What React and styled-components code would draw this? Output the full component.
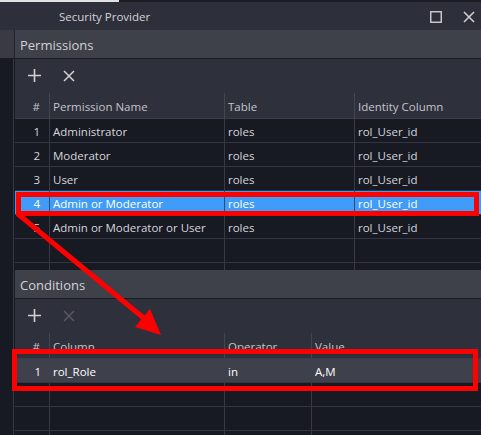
import styled, { createGlobalStyle } from 'styled-components';

const GlobalStyle = createGlobalStyle`
    html, body {
        margin: 0;
        padding: 0;
        background: #171923;
    }
    * {
        box-sizing: border-box;
    }
`;

const Window = styled.div`
    position: relative;
    width: 481px;
    height: 435px;
    display: flex;
    flex-direction: column;
    overflow: hidden;
    background: #171923;
    font-family: "Open Sans", "Liberation Sans", sans-serif;
`;

const TopStrip = styled.div`
    height: 2px;
    display: flex;
    background: #1c1d25;
`;

const TopTab = styled.div`
    width: 119px;
    background: #e2e2e4;
`;

const TitleBar = styled.div`
    height: 28px;
    display: flex;
    align-items: center;
    padding-left: 59px;
    padding-top: 1px;
    background: #2d2f3a;
    color: #d4d4d8;
    font-size: 11.5px;
`;

const WindowControls = styled.div`
    margin-left: auto;
    display: flex;
    align-items: center;
    gap: 21px;
    padding-right: 6px;
`;

const Body = styled.div`
    flex: 1;
    display: flex;
    min-height: 0;
`;

const Gutter = styled.div`
    width: 15px;
    display: flex;
    flex-direction: column;
`;

const GutterTop = styled.div`
    height: 29px;
    background: #393a44;
    border-right: 1px solid #22232b;
    border-bottom: 1px solid #1b1c23;
`;

const GutterRest = styled.div`
    flex: 1;
    background: linear-gradient(
        to right,
        #171923 13px,
        #373842 13px,
        #373842 14px,
        #171923 14px
    );
`;

const Main = styled.div`
    flex: 1;
    display: flex;
    flex-direction: column;
    min-width: 0;
`;

const Panel = styled.section`
    display: flex;
    flex-direction: column;
    height: ${(p) => (p.$height ? `${p.$height}px` : 'auto')};
    flex: ${(p) => (p.$height ? '0 0 auto' : '1')};
    overflow: hidden;
`;

const PanelHeader = styled.div`
    height: 29px;
    display: flex;
    align-items: center;
    padding: 2px 0 0 5px;
    background: #3e404a;
    border-bottom: 1px solid #1b1c23;
    color: #d2d2d6;
    font-size: 13px;
`;

const Toolbar = styled.div`
    height: 34px;
    display: flex;
    align-items: center;
    gap: 21px;
    padding: 0 0 1px 13px;
    background: #2e303b;
`;

const ToolButton = styled.button`
    width: 13px;
    height: 13px;
    padding: 0;
    border: none;
    background: none;
    display: flex;
    align-items: center;
    justify-content: center;
    color: ${(p) => (p.disabled ? '#575862' : '#d2d2d6')};
    cursor: ${(p) => (p.disabled ? 'default' : 'pointer')};
`;

const Grid = styled.div`
    flex: 1;
    overflow: hidden;
    background: #171923;
`;

const HeaderRow = styled.div`
    height: 26px;
    display: grid;
    grid-template-columns: ${(p) => p.$cols};
    background: #2e303b;
    border-bottom: 1px solid #3c3d47;
`;

const HeaderCell = styled.div`
    display: flex;
    align-items: center;
    justify-content: ${(p) => (p.$num ? 'flex-end' : 'flex-start')};
    padding: ${(p) => (p.$num ? '1px 9px 0 0' : '1px 0 0 3px')};
    border-right: ${(p) => (p.$last ? 'none' : '1px solid #44454f')};
    color: #c4c4ca;
    font-size: 11.5px;
    white-space: nowrap;
`;

const Row = styled.div`
    height: 24px;
    display: grid;
    grid-template-columns: ${(p) => p.$cols};
    border-bottom: 1px solid #34353f;
    background: ${(p) =>
        p.$selected === 'active'
            ? '#409cf8'
            : p.$selected === 'inactive'
            ? '#3e404b'
            : 'transparent'};
    color: ${(p) => (p.$selected ? '#ffffff' : '#d6d6da')};
`;

const Cell = styled.div`
    display: flex;
    align-items: center;
    justify-content: ${(p) => (p.$num ? 'flex-end' : 'flex-start')};
    padding: ${(p) => (p.$num ? '2px 9px 0 0' : '2px 0 0 3px')};
    border-right: ${(p) => (p.$last || p.$plain ? 'none' : `1px solid ${p.$line || '#393a44'}`)};
    font-size: 11.5px;
    white-space: nowrap;
    overflow: hidden;
`;

const Annotations = styled.svg`
    position: absolute;
    left: 0;
    top: 0;
    pointer-events: none;
`;

const PlusIcon = () => (
    <svg width="13" height="13" viewBox="0 0 13 13">
        <path d="M6.5 0V13M0 6.5H13" stroke="currentColor" strokeWidth="1.6" />
    </svg>
);

const CrossIcon = ({ size = 12 }) => (
    <svg width={size} height={size} viewBox="0 0 12 12">
        <path d="M1 1L11 11M11 1L1 11" stroke="currentColor" strokeWidth="1.5" />
    </svg>
);

const MaximizeIcon = () => (
    <svg width="12" height="12" viewBox="0 0 12 12">
        <rect x="0.75" y="0.75" width="10.5" height="10.5" fill="none" stroke="#cfcfd4" strokeWidth="1.4" />
    </svg>
);

const PERM_COLS = '35px 175px 130px 1fr';
const COND_COLS = '35px 175px 87px 1fr';

const permissions = [
    { id: 1, name: 'Administrator', table: 'roles', identity: 'rol_User_id' },
    { id: 2, name: 'Moderator', table: 'roles', identity: 'rol_User_id' },
    { id: 3, name: 'User', table: 'roles', identity: 'rol_User_id' },
    { id: 4, name: 'Admin or Moderator', table: 'roles', identity: 'rol_User_id' },
    { id: 5, name: 'Admin or Moderator or User', table: 'roles', identity: 'rol_User_id' },
];

const conditions = [{ id: 1, column: 'rol_Role', operator: 'in', value: 'A,M' }];

const EmptyRow = ({ cols, count }) => (
    <Row $cols={cols}>
        {Array.from({ length: count }).map((_, i) => (
            <Cell key={i} $last={i === count - 1} />
        ))}
    </Row>
);

const App = () => (
    <Window>
        <GlobalStyle />
        <TopStrip>
            <TopTab />
        </TopStrip>
        <TitleBar>
            Security Provider
            <WindowControls>
                <MaximizeIcon />
                <span style={{ color: '#d2d2d6', display: 'flex' }}>
                    <CrossIcon />
                </span>
            </WindowControls>
        </TitleBar>
        <Body>
            <Gutter>
                <GutterTop />
                <GutterRest />
            </Gutter>
            <Main>
                <Panel $height={240}>
                    <PanelHeader>Permissions</PanelHeader>
                    <Toolbar>
                        <ToolButton>
                            <PlusIcon />
                        </ToolButton>
                        <ToolButton>
                            <CrossIcon />
                        </ToolButton>
                    </Toolbar>
                    <HeaderRow $cols={PERM_COLS}>
                        <HeaderCell $num>#</HeaderCell>
                        <HeaderCell>Permission Name</HeaderCell>
                        <HeaderCell>Table</HeaderCell>
                        <HeaderCell $last>Identity Column</HeaderCell>
                    </HeaderRow>
                    <Grid>
                        {permissions.map((p) => {
                            const sel = p.id === 4;
                            const line = sel ? '#2b4c73' : undefined;
                            return (
                                <Row key={p.id} $cols={PERM_COLS} $selected={sel ? 'active' : undefined}>
                                    <Cell $num $line={line}>{p.id}</Cell>
                                    <Cell $line={line}>{p.name}</Cell>
                                    <Cell $line={line}>{p.table}</Cell>
                                    <Cell $last>{p.identity}</Cell>
                                </Row>
                            );
                        })}
                        <EmptyRow cols={PERM_COLS} count={4} />
                        <EmptyRow cols={PERM_COLS} count={4} />
                    </Grid>
                </Panel>
                <Panel>
                    <PanelHeader>Conditions</PanelHeader>
                    <Toolbar>
                        <ToolButton>
                            <PlusIcon />
                        </ToolButton>
                        <ToolButton disabled>
                            <CrossIcon />
                        </ToolButton>
                    </Toolbar>
                    <HeaderRow $cols={COND_COLS}>
                        <HeaderCell $num>#</HeaderCell>
                        <HeaderCell>Column</HeaderCell>
                        <HeaderCell>Operator</HeaderCell>
                        <HeaderCell $last>Value</HeaderCell>
                    </HeaderRow>
                    <Grid>
                        {conditions.map((c) => (
                            <Row key={c.id} $cols={COND_COLS} $selected="inactive">
                                <Cell $num $plain>{c.id}</Cell>
                                <Cell $plain>{c.column}</Cell>
                                <Cell $plain>{c.operator}</Cell>
                                <Cell $last>{c.value}</Cell>
                            </Row>
                        ))}
                        <EmptyRow cols={COND_COLS} count={4} />
                        <EmptyRow cols={COND_COLS} count={4} />
                        <EmptyRow cols={COND_COLS} count={4} />
                    </Grid>
                </Panel>
            </Main>
        </Body>
        <Annotations width="481" height="435" viewBox="0 0 481 435">
            <rect x="18.5" y="194.5" width="458" height="19" fill="none" stroke="#ff0000" strokeWidth="5" />
            <rect x="14.5" y="351.5" width="461" height="37" fill="none" stroke="#ff0000" strokeWidth="5" />
            <line x1="18" y1="214" x2="146" y2="320" stroke="#ff0000" strokeWidth="5" />
            <polygon points="161,335 135,327 150,309" fill="#ff0000" />
        </Annotations>
    </Window>
);

export default App;
